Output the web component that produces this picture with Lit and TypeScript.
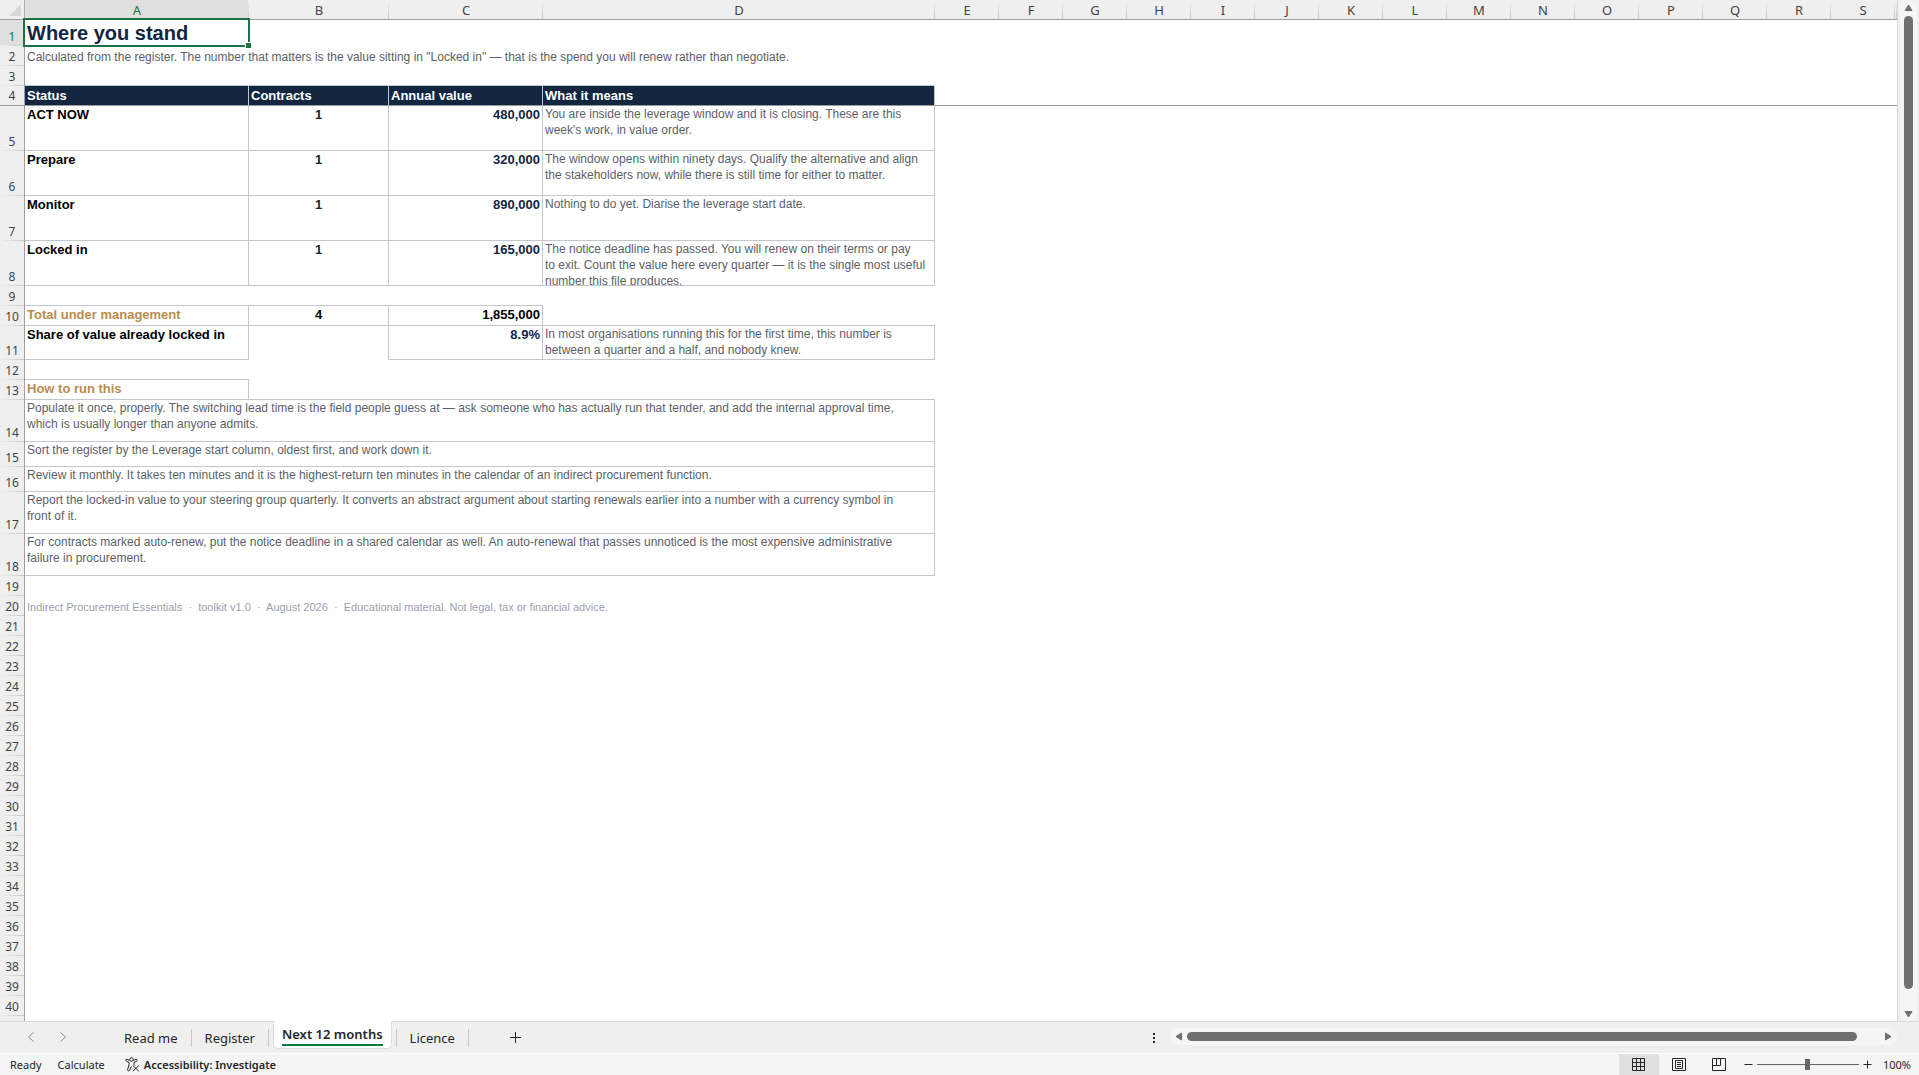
import { LitElement, html, css, svg, nothing } from "lit";
import { customElement, property, state } from "lit/decorators.js";
import { classMap } from "lit/directives/class-map.js";

interface Cell {
  text?: string[];
  span?: number;
  kind?: string;
  /** Edges that carry a rule: "r" right, "b" bottom. */
  edge?: string;
}

interface Row {
  height: number;
  cells: Cell[];
  frozen?: boolean;
}

const COLUMNS = "ABCDEFGHIJKLMNOPQRS".split("");
const LAST_ROW = 40;

const status = (name: string, count: string, value: string, meaning: string[]): Row => ({
  height: 45,
  cells: [
    { text: [name], kind: "label", edge: "rb" },
    { text: [count], kind: "label center navy", edge: "rb" },
    { text: [value], kind: "label right navy", edge: "rb" },
    { text: meaning, kind: "body", edge: "rb" },
  ],
});

const note = (height: number, text: string[]): Row => ({
  height,
  cells: [{ text, span: 4, kind: "body", edge: "rb" }],
});

const blank = (edges: string[] = []): Row => ({
  height: 20,
  cells: [0, 1, 2, 3].map((i) => ({ edge: edges[i] ?? "" })),
});

const ROWS: Row[] = [
  { height: 26, cells: [{ text: ["Where you stand"], kind: "title" }, {}, {}, {}] },
  {
    height: 20,
    cells: [
      {
        text: [
          'Calculated from the register. The number that matters is the value sitting in "Locked in" — that is the spend you will renew rather than negotiate.',
        ],
        span: 4,
        kind: "body low",
      },
    ],
  },
  blank(["b", "b", "b", "b"]),
  {
    height: 20,
    frozen: true,
    cells: [
      { text: ["Status"], kind: "head", edge: "r" },
      { text: ["Contracts"], kind: "head", edge: "r" },
      { text: ["Annual value"], kind: "head", edge: "r" },
      { text: ["What it means"], kind: "head", edge: "r" },
    ],
  },
  status("ACT NOW", "1", "480,000", [
    "You are inside the leverage window and it is closing. These are this",
    "week's work, in value order.",
  ]),
  status("Prepare", "1", "320,000", [
    "The window opens within ninety days. Qualify the alternative and align",
    "the stakeholders now, while there is still time for either to matter.",
  ]),
  status("Monitor", "1", "890,000", ["Nothing to do yet. Diarise the leverage start date."]),
  status("Locked in", "1", "165,000", [
    "The notice deadline has passed. You will renew on their terms or pay",
    "to exit. Count the value here every quarter — it is the single most useful",
    "number this file produces.",
  ]),
  blank(["b", "b", "b"]),
  {
    height: 20,
    cells: [
      { text: ["Total under management"], kind: "label gold", edge: "rb" },
      { text: ["4"], kind: "label center", edge: "rb" },
      { text: ["1,855,000"], kind: "label right", edge: "rb" },
      { edge: "b" },
    ],
  },
  {
    height: 34,
    cells: [
      { text: ["Share of value already locked in"], kind: "label", edge: "rb" },
      { edge: "r" },
      { text: ["8.9%"], kind: "label right navy", edge: "rb" },
      {
        text: [
          "In most organisations running this for the first time, this number is",
          "between a quarter and a half, and nobody knew.",
        ],
        kind: "body",
        edge: "rb",
      },
    ],
  },
  blank(["b"]),
  {
    height: 20,
    cells: [
      { text: ["How to run this"], kind: "label gold", edge: "rb" },
      { edge: "b" },
      { edge: "b" },
      { edge: "b" },
    ],
  },
  note(42, [
    "Populate it once, properly. The switching lead time is the field people guess at — ask someone who has actually run that tender, and add the internal approval time,",
    "which is usually longer than anyone admits.",
  ]),
  note(25, ["Sort the register by the Leverage start column, oldest first, and work down it."]),
  note(25, [
    "Review it monthly. It takes ten minutes and it is the highest-return ten minutes in the calendar of an indirect procurement function.",
  ]),
  note(42, [
    "Report the locked-in value to your steering group quarterly. It converts an abstract argument about starting renewals earlier into a number with a currency symbol in",
    "front of it.",
  ]),
  note(42, [
    "For contracts marked auto-renew, put the notice deadline in a shared calendar as well. An auto-renewal that passes unnoticed is the most expensive administrative",
    "failure in procurement.",
  ]),
  blank(),
  {
    height: 20,
    cells: [
      {
        text: [
          "Indirect Procurement Essentials \u00a0·\u00a0 toolkit v1.0 \u00a0·\u00a0 August 2026 \u00a0·\u00a0 Educational material. Not legal, tax or financial advice.",
        ],
        span: 4,
        kind: "small",
      },
    ],
  },
  ...Array.from({ length: 21 }, () => blank()),
];

@customElement("sheet-grid")
export class SheetGrid extends LitElement {
  static styles = css`
    :host {
      display: block;
      flex: 1;
      min-width: 0;
      overflow: hidden;
      background: #fff;
      border-right: 1px solid #d9d9d9;
    }
    .grid {
      width: 100%;
      table-layout: fixed;
      border-collapse: separate;
      border-spacing: 0;
      font: 12px/16px "Liberation Sans", Arial, sans-serif;
      color: #000;
    }
    .c-row { width: 25px; }
    .c-a { width: 224px; }
    .c-b { width: 140px; }
    .c-c { width: 154px; }
    .c-d { width: 392px; }
    .c-n { width: 64px; }
    th, td {
      box-sizing: border-box;
      padding: 0;
      text-align: left;
      vertical-align: top;
    }
    .col {
      height: 20px;
      padding-top: 2px;
      font: 400 13px/17px "Noto Sans", "Open Sans", sans-serif;
      text-align: center;
      color: #444;
      border-bottom: 1px solid #a0a0a0;
      background: linear-gradient(#efefef, #c8c8c8) right / 1px 100% no-repeat #efefef;
    }
    .col.on, .num.on { background-color: #dfdfdf; color: #1e7145; }
    .corner {
      border-right: 1px solid #b0b0b0;
      background: #efefef;
    }
    .corner svg { display: block; margin: 2px 0 0 9px; }
    .num {
      font: 400 12px/17px "Noto Sans", "Open Sans", sans-serif;
      text-align: center;
      vertical-align: bottom;
      color: #444;
      border-right: 1px solid #a0a0a0;
      background: linear-gradient(90deg, #efefef, #c8c8c8) bottom / 100% 1px no-repeat #efefef;
    }
    .num span { display: block; padding-bottom: 1px; }
    .edge-r { border-right: 1px solid #c3c7cf; }
    .edge-b { border-bottom: 1px solid #c3c7cf; }
    .frozen th, .frozen td { border-bottom: 1px solid #999; }
    .frozen th { background: #efefef; }
    .box {
      box-sizing: border-box;
      overflow: hidden;
      padding: 0 2px;
      white-space: nowrap;
      display: flex;
      flex-direction: column;
    }
    .body { color: #5b5f68; }
    .low .box, .title .box, .small .box { justify-content: flex-end; }
    .small { font-size: 11px; color: #9aa1ad; }
    .title {
      position: relative;
      font-size: 20px;
      line-height: 24px;
      font-weight: 700;
      color: #12263f;
    }
    .label { font-size: 13px; line-height: 18px; font-weight: 700; }
    .head {
      font-size: 13px;
      line-height: 19px;
      font-weight: 700;
      color: #fff;
      background: #12263f;
    }
    .center { text-align: center; }
    .right { text-align: right; }
    .navy { color: #12263f; }
    .gold { color: #b98d50; }
    .cursor {
      position: absolute;
      inset: -2px -1px -1px -2px;
      border: 2px solid #1e7145;
      pointer-events: none;
    }
    .cursor::after {
      content: "";
      position: absolute;
      right: -3px;
      bottom: -3px;
      width: 5px;
      height: 5px;
      background: #1e7145;
      border-top: 1px solid #fff;
      border-left: 1px solid #fff;
    }
  `;

  private cell(c: Cell, height: number) {
    const edge = c.edge ?? "";
    const classes = {
      [c.kind ?? "empty"]: true,
      "edge-r": edge.includes("r"),
      "edge-b": edge.includes("b"),
    };
    const names = Object.entries(classes).filter(([, v]) => v).map(([k]) => k).join(" ");
    return html`<td class=${names} colspan=${c.span ?? 1}>${c.text
      ? html`<div class="box" style="height:${height - 1}px">${c.text.map((t) => html`<span>${t}</span>`)}</div>`
      : nothing}${c.kind === "title" ? html`<div class="cursor"></div>` : nothing}</td>`;
  }

  render() {
    return html`
      <table class="grid">
        <colgroup>
          <col class="c-row" /><col class="c-a" /><col class="c-b" /><col class="c-c" /><col class="c-d" />
          ${COLUMNS.slice(4).map(() => html`<col class="c-n" />`)}
          <col />
        </colgroup>
        <thead>
          <tr>
            <td class="col corner"><svg width="12" height="12" viewBox="0 0 12 12"><path d="M12 0V12H0Z" fill="#d8d8d8" /></svg></td>
            ${COLUMNS.map((c, i) => html`<th scope="col" class=${classMap({ col: true, on: i === 0 })}>${c}</th>`)}
            <td class="col"></td>
          </tr>
        </thead>
        <tbody>
          ${ROWS.map((r, i) => html`
            <tr class=${r.frozen ? "frozen" : "plain"} style="height:${r.height}px">
              <th scope="row" class=${classMap({ num: true, on: i === 0 })}>${i < LAST_ROW
                ? html`<span>${i + 1}</span>`
                : nothing}</th>
              ${r.cells.map((c) => this.cell(c, r.height))}
              <td colspan="16"></td>
            </tr>`)}
        </tbody>
      </table>
    `;
  }
}

@customElement("scroll-track")
export class ScrollTrack extends LitElement {
  @property({ type: Boolean, reflect: true }) vertical = false;

  static styles = css`
    :host {
      display: flex;
      align-items: center;
      box-sizing: border-box;
      background: #f5f5f5;
      border-radius: 8px;
      width: 727px;
      height: 17px;
      padding: 0 5px;
    }
    :host([vertical]) {
      flex-direction: column;
      width: 17px;
      height: auto;
      padding: 4px 0 3px;
    }
    button {
      display: flex;
      flex: none;
      border: 0;
      padding: 0;
      background: none;
    }
    .rail { flex: 1; display: flex; margin: 0 28px 0 5px; }
    .thumb { flex: 1; border-radius: 5px; background: #707070; height: 9px; }
    :host([vertical]) .rail { margin: 5px 0 22px; }
    :host([vertical]) .thumb { height: auto; width: 9px; }
  `;

  render() {
    const v = this.vertical;
    const w = v ? 9 : 7;
    const h = v ? 7 : 9;
    const back = v ? "M4.500 1 8 6.500H1Z" : "M1 4.500 6.500 1V8Z";
    const next = v ? "M4.500 6 8 .5H1Z" : "M6 4.500 .5 1V8Z";
    const arrow = (d: string) => html`<svg width=${w} height=${h} viewBox="0 0 ${w} ${h}">
      <path d=${d} fill="#707070" stroke="#707070" stroke-linejoin="round" /></svg>`;
    return html`
      <button aria-label=${v ? "Scroll up" : "Scroll left"}>${arrow(back)}</button>
      <div class="rail"><div class="thumb"></div></div>
      <button aria-label=${v ? "Scroll down" : "Scroll right"}>${arrow(next)}</button>
    `;
  }
}

const VIEWS = [
  {
    name: "Normal view",
    icon: svg`<path d="M.5 .5H12.500V12.500H.5ZM4.500 .5V12.500M8.500 .5V12.500M.5 4.500H12.500M.5 8.500H12.500" />`,
  },
  {
    name: "Page layout view",
    icon: svg`<path d="M.5 .5H13.500V12.500H.5ZM3.500 2.500H10.500V10.500H3.500ZM5 4.500H9M5 6.500H9M5 8.500H9" />`,
  },
  {
    name: "Page break preview",
    icon: svg`<path d="M.5 .5H13.500V12.500H.5ZM4.500 .5V7.500M8.500 .5V7.500M.5 7.500H8.500" />`,
  },
];

@customElement("app-root")
export class AppRoot extends LitElement {
  @state() private active = "Next 12 months";
  @state() private view = 0;

  static styles = css`
    :host {
      display: flex;
      flex-direction: column;
      height: 100vh;
      overflow: hidden;
      background: #efefef;
      color: #262626;
      font: 13px/20px "Noto Sans", "Open Sans", sans-serif;
    }
    button {
      display: flex;
      align-items: center;
      justify-content: center;
      box-sizing: border-box;
      border: 0;
      padding: 0;
      background: none;
      color: inherit;
      font: inherit;
      white-space: nowrap;
    }
    svg { display: block; fill: none; stroke: #262626; }
    .main { flex: 1; min-height: 0; display: flex; }
    .strip { display: flex; padding: 0 2px; }
    .bar {
      display: flex;
      align-items: center;
      box-sizing: border-box;
      height: 33px;
      flex: none;
      border-top: 1px solid #d9d9d9;
      border-bottom: 1px solid #fff;
    }
    .arrows { display: flex; padding: 0 32px 2px 15px; }
    .arrows button { width: 32px; height: 24px; }
    .arrows svg { stroke: #8a8a8a; }
    .tabs { display: flex; align-items: center; height: 100%; }
    .tab {
      height: 18px;
      padding: 0 13px;
      border-right: 1px solid #c8c8c8;
    }
    .before { margin-right: 4px; }
    .after { margin-left: 4px; border-left: 1px solid #c8c8c8; }
    .tab.active {
      align-self: flex-start;
      height: 28px;
      margin-top: -1px;
      padding: 0 8px;
      background: #fff;
      border: 1px solid #dcdcdc;
      border-top: 0;
      border-radius: 0 0 5px 5px;
      font-weight: 600;
    }
    .tab.active span { border-bottom: 2px solid #107c41; }
    .add { width: 32px; height: 24px; margin-left: 31px; }
    .fill { flex: 1; }
    .dots { width: 20px; height: 24px; margin-right: 6px; }
    .dots svg { fill: #262626; stroke: none; }
    .hscroll { margin: 0 22px 2px 0; }
    .status {
      display: flex;
      align-items: center;
      flex: none;
      height: 21px;
      padding: 0 8px 0 10px;
      background: #f4f4f4;
      font-size: 11px;
      line-height: 20px;
    }
    .ready { margin-right: 16px; }
    .calc { margin-right: 20px; }
    .access { gap: 4px; font-weight: 600; }
    .views { display: flex; }
    .views button { width: 40px; height: 21px; }
    .views button.on { background: #dfdfdf; }
    .zoom { display: flex; align-items: center; gap: 4px; margin-left: 5px; }
    .zoom input {
      appearance: none;
      width: 102px;
      height: 11px;
      margin: 0;
      background: linear-gradient(#666, #666) center / 100% 1px no-repeat;
    }
    .zoom input::-webkit-slider-thumb {
      appearance: none;
      width: 5px;
      height: 11px;
      background: #666;
    }
    .percent { margin-left: 11px; }
  `;

  private tab(name: string, extra = "") {
    const on = this.active === name;
    return html`<button role="tab" aria-selected=${on} class="tab ${on ? "active" : extra}"
      @click=${() => (this.active = name)}><span>${name}</span></button>`;
  }

  render() {
    return html`
      <div class="main">
        <sheet-grid></sheet-grid>
        <div class="strip"><scroll-track vertical></scroll-track></div>
      </div>
      <div class="bar">
        <div class="arrows">
          <button aria-label="Previous sheets"><svg width="8" height="12" viewBox="0 0 8 12"><path d="M6.500 1.500 1.500 6l5 4.500" /></svg></button>
          <button aria-label="Next sheets"><svg width="8" height="12" viewBox="0 0 8 12"><path d="M1.500 1.500 6.500 6l-5 4.500" /></svg></button>
        </div>
        <div class="tabs" role="tablist">
          ${this.tab("Read me")}${this.tab("Register", "before")}${this.tab("Next 12 months")}${this.tab("Licence", "after")}
        </div>
        <button class="add" aria-label="New sheet"><svg width="11" height="11" viewBox="0 0 11 11"><path d="M5.500 0V11M0 5.500H11" /></svg></button>
        <div class="fill"></div>
        <button class="dots" aria-label="Resize tab bar"><svg width="2" height="10" viewBox="0 0 2 10"><path d="M0 0H2V2H0ZM0 4H2V6H0ZM0 8H2V10H0Z" /></svg></button>
        <scroll-track class="hscroll"></scroll-track>
      </div>
      <div class="status">
        <span class="ready">Ready</span>
        <span class="calc">Calculate</span>
        <button class="access">
          <svg width="15" height="15" viewBox="0 0 15 15">
            <circle cx="6.500" cy="2.500" r="1.800" />
            <path d="M4.700 3.400 2 2.300C.5 1.900 .2 3.700 1.300 4.200L4 5.400V8L2.600 12.500C2.300 14 4 14.500 4.600 13.200L6.500 9.500M8.300 3.400 11 2.300C12.500 1.900 12.800 3.700 11.700 4.200L9 5.400V7.500L10 8.500M7.800 8.500 13.800 14.200M13.800 8.500 7.800 14.200" />
          </svg>
          Accessibility: Investigate
        </button>
        <div class="fill"></div>
        <div class="views">
          ${VIEWS.map((v, i) => html`<button aria-label=${v.name} class=${classMap({ on: this.view === i })}
            @click=${() => (this.view = i)}><svg width="14" height="13" viewBox="0 0 14 13">${v.icon}</svg></button>`)}
        </div>
        <div class="zoom">
          <button aria-label="Zoom out"><svg width="9" height="9" viewBox="0 0 9 9"><path d="M.5 4.500H8.500" /></svg></button>
          <input type="range" min="0" max="100" value="50" aria-label="Zoom" />
          <button aria-label="Zoom in"><svg width="9" height="9" viewBox="0 0 9 9"><path d="M.5 4.500H8.500M4.500 .5V8.500" /></svg></button>
        </div>
        <span class="percent">100%</span>
      </div>
    `;
  }
}
